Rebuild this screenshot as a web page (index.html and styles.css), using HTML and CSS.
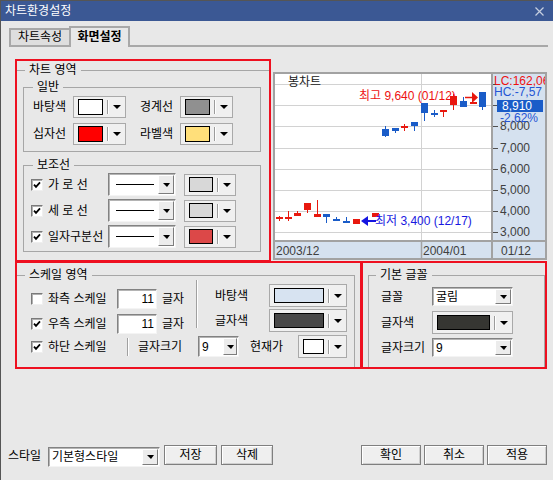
FILE: index.html
```html
<!DOCTYPE html>
<html lang="ko">
<head>
<meta charset="utf-8">
<title>차트환경설정</title>
<link rel="stylesheet" href="styles.css">
</head>
<body>
<div class="dialog">
  <header class="titlebar">
    <span class="title">차트환경설정</span>
    <svg class="close" width="9" height="9" viewBox="0 0 9 9"><path d="M0.5 0.5L8.5 8.5M8.5 0.5L0.5 8.5"/></svg>
  </header>

  <nav class="tabs">
    <div class="tab">차트속성</div>
    <div class="tab active">화면설정</div>
  </nav>

  <main class="page">
    <div class="row-top">
      <section class="mark mark-a">
        <fieldset class="grp grp-chart">
          <legend>차트 영역</legend>
          <fieldset class="grp grp-sub grp-general">
            <legend>일반</legend>
            <div class="general-body">
              <div class="row h22">
                <span class="lbl w40">바탕색</span>
                <span class="picker p53 h22"><i class="sw c-white"></i><i class="sep"></i><i class="arr"></i></span>
                <span class="lbl w40 ml14">경계선</span>
                <span class="picker p53 h22"><i class="sw c-gray"></i><i class="sep"></i><i class="arr"></i></span>
              </div>
              <div class="row h22 mt5">
                <span class="lbl w40">십자선</span>
                <span class="picker p53 h22"><i class="sw c-red"></i><i class="sep"></i><i class="arr"></i></span>
                <span class="lbl w40 ml14">라벨색</span>
                <span class="picker p53 h22"><i class="sw c-yellow"></i><i class="sep"></i><i class="arr"></i></span>
              </div>
            </div>
          </fieldset>
          <fieldset class="grp grp-sub grp-aux">
            <legend>보조선</legend>
            <div class="aux-body">
              <div class="row h23">
                <span class="chk"><svg viewBox="0 0 8 8"><path d="M1 3.6L3 5.8L7 1.4"/></svg></span>
                <span class="lbl w60 ml5">가 로 선</span>
                <span class="combo cmb-line"><span class="val"><i class="line"></i></span><span class="dd"><i class="dd-arr"></i></span></span>
                <span class="picker p52 h22 ml8"><i class="sw c-lgray"></i><i class="sep"></i><i class="arr"></i></span>
              </div>
              <div class="row h23 mt3">
                <span class="chk"><svg viewBox="0 0 8 8"><path d="M1 3.6L3 5.8L7 1.4"/></svg></span>
                <span class="lbl w60 ml5">세 로 선</span>
                <span class="combo cmb-line"><span class="val"><i class="line"></i></span><span class="dd"><i class="dd-arr"></i></span></span>
                <span class="picker p52 h22 ml8"><i class="sw c-lgray"></i><i class="sep"></i><i class="arr"></i></span>
              </div>
              <div class="row h23 mt3">
                <span class="chk"><svg viewBox="0 0 8 8"><path d="M1 3.6L3 5.8L7 1.4"/></svg></span>
                <span class="lbl w60 ml5">일자구분선</span>
                <span class="combo cmb-line"><span class="val"><i class="line"></i></span><span class="dd"><i class="dd-arr"></i></span></span>
                <span class="picker p52 h22 ml8"><i class="sw c-rose"></i><i class="sep"></i><i class="arr"></i></span>
              </div>
            </div>
          </fieldset>
        </fieldset>
      </section>

      <div class="chart">
        <svg width="270" height="184" viewBox="0 0 270 184">
          <g transform="translate(-2 -2)">
            <rect x="219" y="0" width="60" height="200" fill="#d5e1ef"/>
            <rect x="0" y="169" width="219" height="30" fill="#d5e1ef"/>
            <path d="M0 12.5H219M0 33.5H219M0 54.5H219M0 76.5H219M0 97.5H219M0 118.5H219M0 139.5H219M0 160.5H219M148.5 0V169" stroke="#d2d2d2" stroke-width="1" fill="none"/>
            <path d="M219 0V200M0 169H279" stroke="#a2a2a2" stroke-width="2" fill="none"/>
            <path d="M148.5 169V200" stroke="#a2a2a2" stroke-width="1.5" fill="none"/>
            <path d="M220 12.5h5M220 33.5h5M220 54.5h5M220 76.5h5M220 97.5h5M220 118.5h5M220 139.5h5M220 160.5h5" stroke="#505050" stroke-width="1" fill="none"/>

            <text class="ax" x="227" y="54">8,000</text>
            <text class="ax" x="227" y="76">7,000</text>
            <text class="ax" x="227" y="97">6,000</text>
            <text class="ax" x="227" y="118">5,000</text>
            <text class="ax" x="227" y="139">4,000</text>
            <text class="ax" x="227" y="160">3,000</text>

            <text class="t-red" x="221" y="9">LC:162,06</text>
            <text class="t-blue" x="221" y="20">HC:-7,57</text>
            <rect x="224" y="28" width="46" height="12" fill="#1a5cc8"/>
            <text class="t-white" x="229" y="34">8,910</text>
            <text class="t-blue" x="227" y="46">-2,62%</text>

            <text class="ax" x="3" y="179">2003/12</text>
            <text class="ax" x="150" y="179">2004/01</text>
            <text class="ax" x="228" y="179">01/12</text>

            <text class="t-title" x="15" y="10">봉차트</text>

            <g fill="#e8180e">
              <rect x="6" y="144" width="1" height="5"/><rect x="3" y="145" width="7" height="2"/>
              <rect x="15" y="139" width="1" height="10"/><rect x="12" y="145" width="7" height="2"/>
              <rect x="24" y="139" width="1" height="4"/><rect x="21" y="141" width="7" height="3"/>
              <rect x="34" y="131" width="1" height="10"/><rect x="31" y="131" width="7" height="7"/>
              <rect x="44" y="128" width="1" height="17"/><rect x="41" y="142" width="7" height="3"/>
              <rect x="80" y="147" width="7" height="5"/>
              <rect x="99" y="141" width="7" height="4"/>
              <rect x="131" y="52" width="1" height="7"/><rect x="128" y="54" width="7" height="2"/>
              <rect x="170" y="38" width="1" height="7"/><rect x="167" y="38" width="7" height="2"/>
              <rect x="180" y="22" width="1" height="16"/><rect x="177" y="24" width="7" height="9"/>
              <rect x="197" y="30" width="7" height="2"/>
            </g>
            <g fill="#1a5cc8">
              <rect x="53" y="142" width="1" height="9"/><rect x="50" y="142" width="7" height="3"/>
              <rect x="63" y="145" width="1" height="4"/><rect x="60" y="147" width="7" height="2"/>
              <rect x="73" y="145" width="1" height="5"/><rect x="70" y="149" width="7" height="2"/>
              <rect x="112" y="54" width="1" height="11"/><rect x="109" y="57" width="7" height="7"/>
              <rect x="122" y="56" width="1" height="5"/><rect x="119" y="56" width="7" height="3"/>
              <rect x="141" y="50" width="1" height="9"/><rect x="138" y="50" width="7" height="4"/>
              <rect x="151" y="31" width="1" height="18"/><rect x="148" y="31" width="7" height="10"/>
              <rect x="161" y="38" width="1" height="7"/><rect x="158" y="41" width="7" height="2"/>
              <rect x="190" y="25" width="1" height="10"/><rect x="187" y="29" width="7" height="6"/>
              <rect x="209" y="20" width="1" height="18"/><rect x="206" y="20" width="7" height="15"/>
            </g>

            <path d="M192 25.5H200" stroke="#e8180e" stroke-width="1.5"/>
            <polygon points="199,20 205,25.5 199,31" fill="#e8180e"/>
            <text class="t-red" x="86" y="24">최고 9,640 (01/12)</text>

            <polygon points="88,149 95,144 95,154" fill="#1515e0"/>
            <rect x="95" y="148" width="8" height="2" fill="#1515e0"/>
            <text class="t-blue2" x="102" y="149">최저 3,400 (12/17)</text>
          </g>
        </svg>
      </div>
    </div>

    <div class="row-bottom">
      <section class="mark mark-b">
        <fieldset class="grp grp-scale">
          <legend>스케일 영역</legend>
          <div class="scale-body">
            <div class="scale-top">
              <div class="scale-left">
                <div class="row h20">
                  <span class="chk"></span>
                  <span class="lbl w69 ml5">좌측 스케일</span>
                  <span class="num">11</span>
                  <span class="lbl w24 ml5">글자</span>
                </div>
                <div class="row h20 mt5">
                  <span class="chk"><svg viewBox="0 0 8 8"><path d="M1 3.6L3 5.8L7 1.4"/></svg></span>
                  <span class="lbl w69 ml5">우측 스케일</span>
                  <span class="num">11</span>
                  <span class="lbl w24 ml5">글자</span>
                </div>
              </div>
              <i class="vsep vsep-tall"></i>
              <div class="scale-right">
                <div class="row h23">
                  <span class="lbl w54">바탕색</span>
                  <span class="picker p78 h23"><i class="sw c-lblue"></i><i class="sep"></i><i class="arr"></i></span>
                </div>
                <div class="row h23 mt2">
                  <span class="lbl w54">글자색</span>
                  <span class="picker p78 h23"><i class="sw c-dark"></i><i class="sep"></i><i class="arr"></i></span>
                </div>
              </div>
            </div>
            <div class="row h23 scale-bottom">
              <span class="chk"><svg viewBox="0 0 8 8"><path d="M1 3.6L3 5.8L7 1.4"/></svg></span>
              <span class="lbl w79 ml5">하단 스케일</span>
              <i class="vsep vsep-short"></i>
              <span class="lbl w60 ml9">글자크기</span>
              <span class="combo cmb-size"><span class="val">9</span><span class="dd"><i class="dd-arr"></i></span></span>
              <span class="lbl w48 ml11">현재가</span>
              <span class="picker p49 h23"><i class="sw c-white"></i><i class="sep"></i><i class="arr"></i></span>
            </div>
          </div>
        </fieldset>
      </section>

      <section class="mark mark-c">
        <fieldset class="grp grp-font">
          <legend>기본 글꼴</legend>
          <div class="font-body">
            <div class="row h19">
              <span class="lbl w51">글꼴</span>
              <span class="combo cmb-font"><span class="val">굴림</span><span class="dd"><i class="dd-arr"></i></span></span>
            </div>
            <div class="row h23 mt5">
              <span class="lbl w51">글자색</span>
              <span class="picker p81 h23"><i class="sw c-char"></i><i class="sep"></i><i class="arr"></i></span>
            </div>
            <div class="row h19 mt4">
              <span class="lbl w51">글자크기</span>
              <span class="combo cmb-font"><span class="val">9</span><span class="dd"><i class="dd-arr"></i></span></span>
            </div>
          </div>
        </fieldset>
      </section>
    </div>
  </main>

  <footer class="bottombar">
    <span class="lbl w40 bar-lbl">스타일</span>
    <span class="combo cmb-style"><span class="val">기본형스타일</span><span class="dd"><i class="dd-arr"></i></span></span>
    <button class="btn w53 ml4">저장</button>
    <button class="btn w52 ml4">삭제</button>
    <span class="spacer"></span>
    <button class="btn w60">확인</button>
    <button class="btn w60 ml3">취소</button>
    <button class="btn w60 ml3">적용</button>
  </footer>
</div>
</body>
</html>
```

FILE: styles.css
```css
* { box-sizing: border-box; }
html, body { margin: 0; padding: 0; }
body {
  width: 553px;
  height: 480px;
  overflow: hidden;
  background: #e8e8e8;
  font-family: "Liberation Sans", "Noto Sans CJK KR", sans-serif;
  font-size: 12px;
  line-height: 14px;
  color: #000;
}

.dialog {
  width: 553px;
  height: 480px;
  border-top: 1px solid #555;
  border-left: 1px solid #555;
  display: flex;
  flex-direction: column;
}

/* title bar */
.titlebar {
  flex: none;
  height: 20px;
  background: #3b5894;
  display: flex;
  align-items: center;
  padding: 0 9px 0 4px;
}
.title { flex: 1; color: #fff; font-size: 12px; }
.close { display: block; stroke: #c6cfe0; stroke-width: 1.2; fill: none; }

/* tabs */
.tabs {
  flex: none;
  display: flex;
  align-items: flex-end;
  width: 539px;
  height: 21px;
  margin: 5px 0 0 8px;
  border-bottom: 2px solid #a8a8a8;
}
.tab {
  width: 60px;
  height: 17px;
  border: 2px solid #a8a8a8;
  border-bottom: none;
  border-right: none;
  background: #dedede;
  display: flex;
  align-items: center;
  justify-content: center;
  padding-bottom: 2px;
}
.tab.active {
  width: 61px;
  height: 21px;
  margin-bottom: -2px;
  border-right: 2px solid #a8a8a8;
  background: #e8e8e8;
  font-weight: bold;
}

/* page */
.page { flex: none; padding: 12px 0 0 14px; }
.row-top { display: flex; align-items: flex-start; }
.row-bottom { display: flex; margin-top: -1px; }

.mark { border: 2px solid #ee1020; }
.mark-a { width: 256px; height: 203px; }
.mark-b { width: 347px; height: 108px; }
.mark-c { width: 186px; height: 108px; margin-left: -1px; }

.chart {
  width: 274px;
  height: 188px;
  margin: 13px 0 0 2px;
  border: 2px solid #a2a2a2;
  background: #fff;
}
.chart svg { display: block; }
.chart text {
  font-family: "Liberation Sans", "Noto Sans CJK KR", sans-serif;
  font-size: 12px;
  dominant-baseline: central;
}
.chart .ax { fill: #404040; }
.chart .t-red { fill: #ee1111; }
.chart .t-blue { fill: #2455d4; }
.chart .t-blue2 { fill: #1818e0; }
.chart .t-white { fill: #fff; }
.chart .t-title { fill: #202020; }

/* group boxes */
fieldset { margin: 0; padding: 0; min-width: 0; border: 0; }
legend { padding: 0 4px; line-height: 14px; }

.grp-chart { margin-top: 2px; border-top: 1px solid #a6a6a6; }
.grp-chart > legend { margin-left: 8px; }

.grp-sub { border: 1px solid #a6a6a6; margin: 0 8px 0 6px; }
.grp-sub > legend { margin-left: 9px; }
.grp-general { margin-top: 3px; }
.grp-aux { margin-top: 6px; }
.general-body { padding: 2px 0 6px 9px; }
.aux-body { padding: 1px 0 3px 7px; }

.grp-scale {
  margin: 5px 5px 0 0;
  height: 99px;
  border-top: 1px solid #a6a6a6;
  border-right: 1px solid #a6a6a6;
}
.grp-scale > legend { margin-left: 8px; }
.scale-body { padding-left: 14px; }
.scale-top { display: flex; align-items: flex-start; }
.scale-left { padding-top: 7px; }
.scale-right { margin-left: 17px; padding-top: 2px; }
.scale-bottom { margin-top: 1px; }

.grp-font {
  margin: 5px 0 0 5px;
  height: 99px;
  border: 1px solid #a6a6a6;
  border-bottom: none;
}
.grp-font > legend { margin-left: 7px; }
.font-body { padding: 5px 0 0 12px; }

/* rows & labels */
.row { display: flex; align-items: center; }
.h19 { height: 19px; }
.h20 { height: 20px; }
.h22 { height: 22px; }
.h23 { height: 23px; }
.mt2 { margin-top: 2px; }
.mt3 { margin-top: 3px; }
.mt4 { margin-top: 4px; }
.mt5 { margin-top: 5px; }
.ml3 { margin-left: 3px; }
.ml4 { margin-left: 4px; }
.ml5 { margin-left: 5px; }
.ml8 { margin-left: 8px; }
.ml9 { margin-left: 9px; }
.ml11 { margin-left: 11px; }
.ml14 { margin-left: 14px; }

.lbl { flex: none; white-space: nowrap; }
.w24 { width: 24px; }
.w40 { width: 40px; }
.w48 { width: 48px; }
.w51 { width: 51px; }
.w54 { width: 54px; }
.w60 { width: 60px; }
.w69 { width: 69px; }
.w79 { width: 79px; }
.w52 { width: 52px; }
.w53 { width: 53px; }

/* color picker */
.picker {
  flex: none;
  display: flex;
  align-items: center;
  border: 1px solid #a9a9a9;
  background: #f0f0f0;
  padding: 0 4px;
}
.p49 { width: 49px; }
.p52 { width: 52px; }
.p53 { width: 53px; }
.p78 { width: 78px; }
.p81 { width: 81px; }
.sw { display: block; flex: 1; height: 16px; border: 1px solid #000; }
.h23 .sw, .picker.h23 .sw { height: 15px; }
.sep {
  display: block;
  flex: none;
  width: 2px;
  height: 14px;
  margin-left: 4px;
  border-left: 1px solid #9c9c9c;
  border-right: 1px solid #fff;
}
.arr {
  display: block;
  flex: none;
  margin-left: 4px;
  width: 0;
  height: 0;
  border-left: 4px solid transparent;
  border-right: 4px solid transparent;
  border-top: 4px solid #000;
}

.c-white { background: #fff; }
.c-gray { background: #909090; }
.c-red { background: #ff0000; }
.c-yellow { background: #ffdf7a; }
.c-lgray { background: #d8d8d8; }
.c-rose { background: #dc4848; }
.c-lblue { background: #d7e3f1; }
.c-dark { background: #484848; }
.c-char { background: #363632; }

/* combo box */
.combo {
  flex: none;
  display: flex;
  background: #fff;
  border: 1px solid;
  border-color: #828282 #f4f4f4 #f4f4f4 #828282;
  box-shadow: inset 1px 1px 0 #b4b4b4;
  padding: 1px;
}
.combo .val {
  flex: 1;
  display: flex;
  align-items: center;
  padding-left: 2px;
  white-space: nowrap;
  overflow: hidden;
}
.combo .dd {
  flex: none;
  width: 16px;
  background: #ececec;
  border: 1px solid;
  border-color: #fff #7c7c7c #7c7c7c #fff;
  display: flex;
  align-items: center;
  justify-content: center;
}
.dd-arr {
  display: block;
  width: 0;
  height: 0;
  border-left: 4px solid transparent;
  border-right: 3px solid transparent;
  border-top: 4px solid #000;
}
.cmb-line { width: 68px; height: 23px; }
.cmb-line .line { display: block; margin-left: 4px; width: 38px; height: 1px; background: #000; }
.cmb-size { width: 41px; height: 21px; }
.cmb-size .dd { width: 14px; }
.cmb-font { width: 81px; height: 19px; }
.cmb-style { width: 112px; height: 20px; margin-top: 2px; }

/* number input */
.num {
  flex: none;
  width: 40px;
  height: 20px;
  background: #fff;
  border: 1px solid;
  border-color: #828282 #f4f4f4 #f4f4f4 #828282;
  box-shadow: inset 1px 1px 0 #b4b4b4;
  text-align: right;
  padding-right: 2px;
  line-height: 18px;
}

/* checkbox */
.chk {
  flex: none;
  width: 12px;
  height: 12px;
  background: #fff;
  border: 1px solid;
  border-color: #7a7a7a #efefef #efefef #7a7a7a;
  box-shadow: inset 1px 1px 0 #b0b0b0;
  display: flex;
  align-items: center;
  justify-content: center;
}
.chk svg { display: block; width: 8px; height: 8px; fill: none; stroke: #000; stroke-width: 1.8; }

/* separators */
.vsep {
  display: block;
  flex: none;
  width: 2px;
  border-left: 1px solid #a0a0a0;
  border-right: 1px solid #fff;
}
.vsep-tall { height: 48px; margin: -2px 0 0 10px; }
.vsep-short { height: 18px; }

/* bottom bar */
.bottombar {
  flex: none;
  display: flex;
  align-items: flex-start;
  height: 22px;
  margin-top: 76px;
  padding: 0 6px 0 7px;
}
.bar-lbl { line-height: 22px; }
.spacer { flex: 1; }
.btn {
  flex: none;
  height: 20px;
  padding: 0;
  font: inherit;
  color: #000;
  border: 1px solid #7f7f7f;
  box-shadow: inset 1px 1px 0 #fff, inset -1px -1px 0 #cfcfcf;
  background: #efefef;
  display: flex;
  align-items: center;
  justify-content: center;
}
```
